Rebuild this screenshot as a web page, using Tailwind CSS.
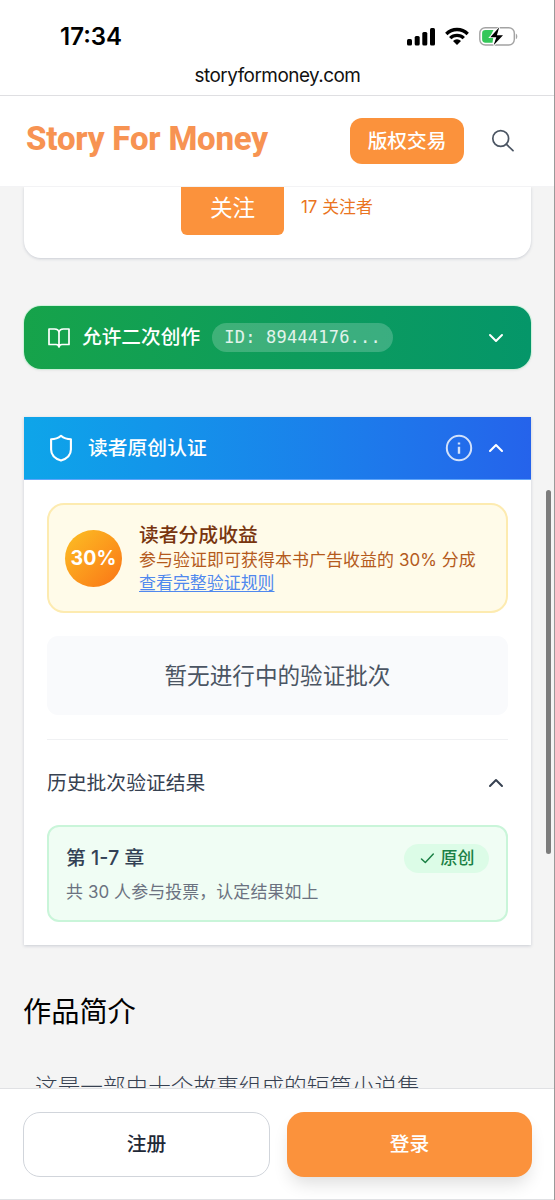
<!DOCTYPE html>
<html lang="zh-CN">
<head>
<meta charset="utf-8">
<title>Story For Money</title>
<script src="https://cdn.jsdelivr.net/npm/@tailwindcss/browser@4"></script>
</head>
<body class="relative flex h-[1200px] w-[555px] flex-col overflow-hidden bg-[#f4f4f4] font-['Inter','Noto_Sans_CJK_SC',sans-serif]">
  <!-- status bar -->
  <div class="flex h-[57px] shrink-0 items-start justify-between bg-white pr-[37px] pl-[60px]">
    <div class="pt-[22px] text-[24px] leading-[30px] font-semibold tracking-[0px] text-black">17:34</div>
    <div class="flex items-center gap-[10px] pt-[26px]">
      <svg class="h-[20px] w-[29px]" viewBox="0 0 29 20"><rect x="0" y="13" width="5" height="6.5" rx="1.5"/><rect x="7.7" y="10" width="5" height="9.5" rx="1.5"/><rect x="15.3" y="6" width="5" height="13.5" rx="1.5"/><rect x="23" y="2" width="5" height="17.5" rx="1.5"/></svg>
      <svg class="-ml-px h-[20px] w-[24px]" viewBox="0 0 24 20"><g fill="none" stroke="#000" stroke-width="3.3"><path d="M1.300 8A15 15 0 0 1 22.700 8"/><path d="M5.200 12.100A9.600 9.600 0 0 1 18.800 12.100"/></g><path d="M8 14.900a5.700 5.700 0 0 1 8 0L12 19.100z"/></svg>
      <svg class="h-[20px] w-[39px]" viewBox="0 0 39 20"><rect x="0.800" y="1.700" width="34.500" height="17.300" rx="5.500" fill="none" stroke="#a3a3a3" stroke-width="1.400"/><path d="M36.800 7.500c2 .8 2 5 0 5.800z" fill="#a3a3a3"/><path d="M6.500 4h8l-3 6h3l-1 6.700h-7q-3.400 0-3.400-3.400v-6q0-3.300 3.400-3.300z" fill="#34c759"/><path d="M20.200 1.300 11.300 11.200h6L14.600 19.300 24 9.200h-6.100z" fill="#000" stroke="#fff" stroke-width="1.800" paint-order="stroke"/></svg>
    </div>
  </div>
  <div class="flex h-[39px] shrink-0 items-center justify-center border-b border-[#dfdfe2] bg-white text-[18.900px] tracking-[-0.500px] text-[#111]">storyformoney.com</div>
  <!-- site header -->
  <header class="flex h-[91px] shrink-0 items-center border-b border-[#f3f3f5] bg-white pr-[40px] pl-[26px]">
    <h1 class="flex-1 pb-[5px] font-['Roboto'] text-[33px] leading-[40px] font-extrabold tracking-[-0.200px] whitespace-nowrap text-[#f79352]">Story For Money</h1>
    <button class="flex h-[46px] w-[114px] items-center justify-center rounded-[12px] bg-[#fb923c] pt-[2px] text-[19.700px] font-medium text-white">版权交易</button>
    <svg class="ml-[26px] h-[26px] w-[25px]" viewBox="0 0 25 26" fill="none" stroke="#4b5563" stroke-width="1.700" stroke-linecap="round"><circle cx="10.700" cy="10.500" r="7.900"/><path d="m16.300 16.200 6.700 6.500"/></svg>
  </header>
  <main class="flex min-h-0 flex-1 flex-col overflow-hidden px-[24px]">
    <section class="flex h-[71px] w-[507px] shrink-0 rounded-b-[17px] bg-white pl-[157px] shadow-[0_1px_3px_rgba(80,90,120,0.25)]">
      <div class="flex h-[48px] w-[103px] items-center justify-center rounded-b-[6px] bg-[#fb923c] pb-[6px] text-[22.600px] text-white">关注</div>
      <div class="ml-[17px] pt-[8px] text-[16.900px] leading-[25px] text-[#ea7421]">17 关注者</div>
    </section>
    <section class="mt-[48px] flex h-[63px] w-[507px] shrink-0 items-center rounded-[17px] bg-linear-to-r from-[#16a34a] to-[#059669] px-[23px] text-white shadow-[0_0_0_1px_rgba(187,247,208,0.6),0_1px_3px_rgba(0,0,0,0.1)]">
      <svg class="size-[24px]" viewBox="0 0 24 24" fill="none" stroke="currentColor" stroke-width="1.700" stroke-linecap="round" stroke-linejoin="round"><path d="M2 3h5.500a4.500 4 0 0 1 4.500 3.500v14.500a3 3 0 0 0-3-2.500H2zM22 3h-5.500a4.500 4 0 0 0-4.500 3.500v14.500a3 3 0 0 1 3-2.500h7z"/></svg>
      <div class="ml-[11px] pt-px text-[19.700px] font-medium">允许二次创作</div>
      <div class="ml-[12px] flex h-[29px] w-[181px] items-center justify-center rounded-full bg-white/20 font-['DejaVu_Sans_Mono'] text-[17px] tracking-[0.200px] whitespace-pre text-white/85">ID: 89444176...</div>
      <svg class="ml-auto h-[24px] w-[24px]" viewBox="0 0 24 24" fill="none" stroke="currentColor" stroke-width="2" stroke-linecap="round" stroke-linejoin="round"><path d="m6 9 6 6 6-6"/></svg>
    </section>
    <section class="mt-[48px] h-[528px] w-[507px] shrink-0 bg-white shadow-[0_1px_3px_rgba(80,90,120,0.25)]">
      <div class="flex h-[63px] items-center border-b border-[#60a5fa] bg-linear-to-r from-[#0ea5e9] to-[#2563eb] pr-[23px] pl-[23px] text-white">
        <svg class="size-[28px]" viewBox="0 0 28 28" fill="none" stroke="currentColor" stroke-width="2.100" stroke-linejoin="round"><path d="M14 1.800c2.600 2.200 6.300 3.500 9.900 3.500v10.200c0 6-4.400 9.300-9.900 11.100-5.500-1.800-9.900-5.100-9.900-11.100V5.300C7.700 5.300 11.400 4 14 1.800z"/></svg>
        <div class="ml-[13px] pt-[2px] text-[19.800px] font-medium">读者原创认证</div>
        <svg class="ml-auto size-[28px] opacity-80" viewBox="0 0 28 28" fill="none" stroke="currentColor" stroke-width="2"><circle cx="14" cy="14" r="12.200"/><path stroke-width="2.400" d="M14 12.700v7M14 8.400v2.200"/></svg>
        <svg class="ml-[11px] size-[24px]" viewBox="0 0 24 24" fill="none" stroke="currentColor" stroke-width="2.100" stroke-linecap="round" stroke-linejoin="round"><path d="m6 15 6-6 6 6"/></svg>
      </div>
      <div class="flex flex-col px-[23px] pt-[23px]">
        <div class="flex h-[110px] w-[461px] items-center rounded-[17px] border-2 border-[#fdebb0] bg-[#fffbe9] pl-[16px]">
          <div class="flex size-[57px] shrink-0 items-center justify-center rounded-full bg-linear-to-br from-[#fbbf24] to-[#f97316] pt-px text-[19.500px] font-bold tracking-[0.200px] text-white">30%</div>
          <div class="ml-[17px] flex flex-col pt-px">
            <div class="h-[27px] text-[19.800px] leading-[27px] font-medium text-[#78350f]">读者分成收益</div>
            <div class="h-[23px] text-[16.950px] leading-[23px] tracking-[0.070px] whitespace-nowrap text-[#b45a1c]">参与验证即可获得本书广告收益的 30% 分成</div>
            <a class="h-[23px] text-[16.950px] leading-[23px] text-[#5088ee] underline underline-offset-2">查看完整验证规则</a>
          </div>
        </div>
        <div class="mt-[23px] flex h-[79px] w-[461px] items-center justify-center rounded-[11px] bg-[#f9fafc] pt-px text-[22.600px] text-[#4b5563]">暂无进行中的验证批次</div>
        <div class="mt-[24px] flex h-[86px] w-[461px] items-center border-t border-[#f0f1f3] text-[19.800px] text-[#374151]">
          <div class="pt-[2px]">历史批次验证结果</div>
          <svg class="ml-auto size-[24px]" viewBox="0 0 24 24" fill="none" stroke="#374151" stroke-width="2" stroke-linecap="round" stroke-linejoin="round"><path d="m6 15 6-6 6 6"/></svg>
        </div>
        <div class="flex h-[97px] w-[461px] flex-col rounded-[12px] border-2 border-[#c9f5d9] bg-[#f0fdf4] px-[17px] pt-[16px]">
          <div class="flex h-[30px] items-center justify-between">
            <div class="pt-px text-[19.800px] font-medium text-[#334155]">第 1-7 章</div>
            <div class="flex h-[29px] w-[85px] items-center justify-center gap-[5px] rounded-full bg-[#dcfce7] text-[16.950px] font-medium text-[#1b8045]">
              <svg class="size-[17px]" viewBox="0 0 17 17" fill="none" stroke="currentColor" stroke-width="1.500" stroke-linecap="round" stroke-linejoin="round"><path d="m2.500 9 3.800 3.500 8-8.500"/></svg>
              <span class="pt-px">原创</span>
            </div>
          </div>
          <div class="mt-[7px] text-[16.950px] leading-[25px] tracking-[0.100px] text-[#6b7280]">共 30 人参与投票，认定结果如上</div>
        </div>
      </div>
    </section>
    <h2 class="mt-[46px] -ml-px h-[42px] shrink-0 text-[28.200px] leading-[42px] text-black">作品简介</h2>
    <p class="mt-[36px] h-[40px] shrink-0 pl-[11px] text-[22.650px] leading-[36px] font-light whitespace-nowrap text-[#374151]">这是一部由十个故事组成的短篇小说集</p>
  </main>
  <footer class="flex h-[112px] shrink-0 gap-[17px] border-t border-b border-[#e0e1e4] bg-white px-[23px] pt-[23px]">
    <button class="flex h-[65px] w-[247px] items-center justify-center rounded-[17px] border-[1.500px] border-[#d1d5db] pt-px text-[19.800px] font-medium text-[#1f2937]">注册</button>
    <button class="flex h-[65px] w-[245px] items-center justify-center rounded-[17px] bg-[#fb923c] text-[19.800px] font-medium text-white shadow-[0_10px_18px_-4px_rgba(0,0,0,0.14)]">登录</button>
  </footer>
  <!-- scroll thumb and window edge -->
  <div class="absolute top-[490px] right-[4px] h-[364px] w-[5px] rounded-full bg-[#7c7c7c]"></div>
  <div class="absolute top-0 right-0 h-full w-px bg-[#9a9a9a]"></div>
</body>
</html>
